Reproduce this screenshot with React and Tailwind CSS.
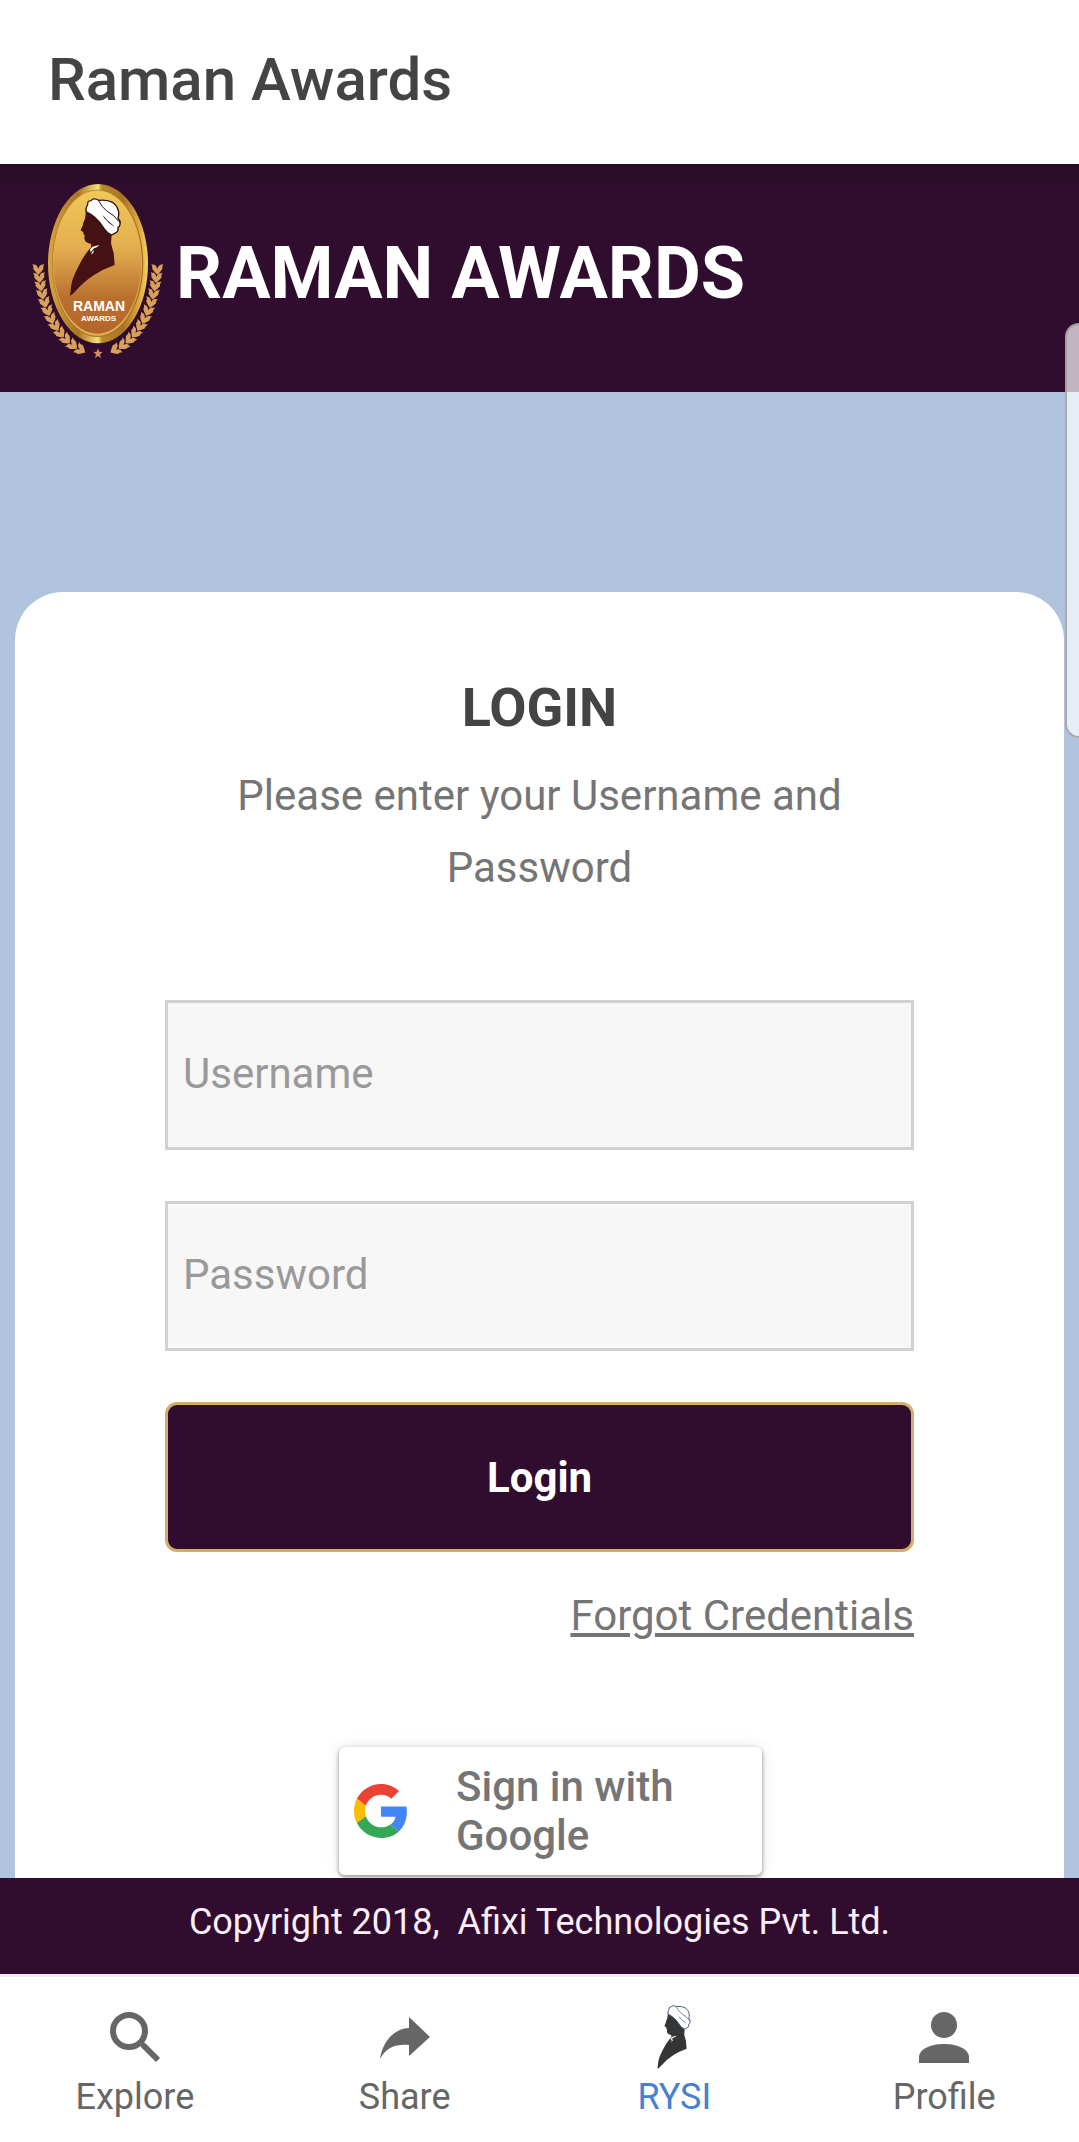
const LEAVES = [
  { x: 55, y: 297, r: 0 },
  { x: 58, y: 322, r: -4 },
  { x: 62, y: 347, r: -7 },
  { x: 67, y: 372, r: -10 },
  { x: 74, y: 397, r: -14 },
  { x: 83, y: 422, r: -18 },
  { x: 93, y: 446, r: -23 },
  { x: 106, y: 468, r: -30 },
  { x: 121, y: 489, r: -36 },
  { x: 138, y: 508, r: -43 },
  { x: 158, y: 525, r: -50 },
  { x: 181, y: 539, r: -60 },
];

/* Head in profile with turban, shared by the logo and the tab bar */
function Bust({ fill, line }) {
  return (
    <g>
      <path
        fill={fill}
        d="M198 122 L195 146 L190 158 Q189 168 182 180 Q184 185 190 185 L190 192 L194 196 L193 204 Q194 216 204 219 L213 222 L214 230 L206 240 Q188 262 175 290 Q156 325 153 350 L150 377 Q158 374 166 364 Q190 336 222 315 Q250 297 284 285 L281 250 L273 220 L275 194 L262 150 Z"
      />
      <path fill="#fff" d="M210 238 L218 230 L238 225 L232 231 L222 235 L212 247 Z M216 246 L222 240 L220 248 L213 254 Z" />
      <path
        fill="#fff"
        stroke={line}
        strokeWidth="4"
        strokeLinejoin="round"
        d="M198 125 Q197 112 203 104 Q201 93 213 92 Q221 82 237 91 Q262 88 279 98 Q298 112 296 136 L294 145 Q303 154 300 163 Q299 170 294 172 Q296 186 284 190 L275 195 Q262 190 254 178 Q242 158 224 142 Q212 132 198 125 Z"
      />
      <path fill="none" stroke={line} strokeWidth="3" d="M236 92 Q245 112 262 124 Q284 136 298 156" />
      <path fill={line} d="M243 128 Q252 146 266 158 L284 171 L279 165 L262 151 Q254 140 247 135 Z" />
    </g>
  );
}

function Leaf({ x, y, r }) {
  return (
    <path
      transform={`translate(${x} ${y}) rotate(${r})`}
      d="M-18 -15 Q-12 -12 -8 -13 Q-2 -9 0 -1 Q2 -9 8 -13 Q12 -12 18 -15 Q13 -8 15 0 Q10 8 0 17 Q-10 8 -15 0 Q-13 -8 -18 -15 Z"
    />
  );
}

function Logo() {
  return (
    <svg viewBox="0 0 450 600" className="w-[150px] h-[200px] shrink-0" role="img" aria-label="Raman Awards logo">
      <defs>
        <linearGradient id="rim" x1="0" y1="0" x2="1" y2="0">
          <stop offset="0" stopColor="#d9a441" />
          <stop offset="0.3" stopColor="#a9741f" />
          <stop offset="0.5" stopColor="#f5e27a" />
          <stop offset="0.54" stopColor="#b88a2c" />
          <stop offset="0.75" stopColor="#a87424" />
          <stop offset="0.9" stopColor="#dca63c" />
          <stop offset="1" stopColor="#f3cf62" />
        </linearGradient>
        <linearGradient id="field" x1="0" y1="0" x2="0" y2="1">
          <stop offset="0" stopColor="#efc857" />
          <stop offset="0.4" stopColor="#e3ae50" />
          <stop offset="0.75" stopColor="#b9702f" />
          <stop offset="1" stopColor="#b5652c" />
        </linearGradient>
      </defs>
      <ellipse cx="234" cy="281" rx="150" ry="239" fill="url(#rim)" />
      <ellipse cx="233" cy="280" rx="137" ry="221" fill="#a8742a" />
      <ellipse cx="232" cy="279" rx="134" ry="218" fill="#e6b04c" />
      <ellipse cx="232" cy="277" rx="132" ry="214" fill="url(#field)" />
      <Bust fill="#451112" line="#33100f" />
      <text x="237" y="423" textAnchor="middle" fill="#fff" className="font-['Liberation_Sans',sans-serif] text-[42px] font-bold">
        RAMAN
      </text>
      <text x="236" y="454" textAnchor="middle" fill="#fff" className="font-['Liberation_Sans',sans-serif] text-[24px] font-bold">
        AWARDS
      </text>
      <g fill="#d9a05a">
        {LEAVES.map((leaf) => (
          <Leaf key={leaf.y} {...leaf} />
        ))}
        <g transform="translate(467 0) scale(-1 1)">
          {LEAVES.map((leaf) => (
            <Leaf key={leaf.y} {...leaf} />
          ))}
        </g>
        <path fill="#cf8f5c" d="M234 535 L238 545 L248 546 L240 553 L243 564 L234 558 L225 564 L228 553 L220 546 L230 545 Z" />
      </g>
    </svg>
  );
}

function GoogleIcon() {
  return (
    <svg viewBox="0 0 48 48" className="w-[54px] h-[54px] shrink-0" aria-hidden="true">
      <path fill="#EA4335" d="M24 9.5c3.54 0 6.71 1.22 9.21 3.6l6.85-6.85C35.9 2.38 30.47 0 24 0 14.62 0 6.51 5.38 2.56 13.22l7.98 6.19C12.43 13.72 17.74 9.5 24 9.5z" />
      <path fill="#4285F4" d="M46.98 24.55c0-1.57-.15-3.09-.38-4.55H24v9.02h12.94c-.58 2.96-2.26 5.48-4.78 7.18l7.73 6c4.51-4.18 7.09-10.36 7.09-17.65z" />
      <path fill="#FBBC05" d="M10.53 28.59c-.48-1.45-.76-2.99-.76-4.59s.27-3.14.76-4.59l-7.98-6.19C.92 16.46 0 20.12 0 24c0 3.88.92 7.54 2.56 10.78l7.97-6.19z" />
      <path fill="#34A853" d="M24 48c6.48 0 11.93-2.13 15.89-5.81l-7.73-6c-2.15 1.45-4.92 2.3-8.16 2.3-6.26 0-11.57-4.22-13.47-9.91l-7.98 6.19C6.51 42.62 14.62 48 24 48z" />
    </svg>
  );
}

function SearchIcon() {
  return (
    <svg viewBox="0 0 54 54" className="w-[54px] h-[54px]" fill="none" stroke="#666" aria-hidden="true">
      <circle cx="21" cy="21" r="16" strokeWidth="6" />
      <path strokeWidth="6" d="M35 35 L50 50" />
      <path strokeWidth="5" d="M32 32 L37 37" />
    </svg>
  );
}

function ShareIcon() {
  return (
    <svg viewBox="0 0 54 54" className="w-[54px] h-[54px]" fill="#666" aria-hidden="true">
      <path d="M31 7 L52 27 L31 46 V35 C17 34 8 38 2 49 C4 35 13 19 31 18 Z" />
    </svg>
  );
}

function BustIcon() {
  return (
    <svg viewBox="150 84 152 294" className="w-[34px] h-16" aria-hidden="true">
      <Bust fill="#333536" line="#34465c" />
    </svg>
  );
}

function ProfileIcon() {
  return (
    <svg viewBox="0 0 54 54" className="w-[54px] h-[54px]" fill="#666" aria-hidden="true">
      <circle cx="27" cy="15" r="13" />
      <path d="M2 53 V46 C4 37 17 34 27 34 C37 34 50 37 52 46 V53 Z" />
    </svg>
  );
}

const TABS = [
  { label: "Explore", Icon: SearchIcon },
  { label: "Share", Icon: ShareIcon },
  { label: "RYSI", Icon: BustIcon, active: true },
  { label: "Profile", Icon: ProfileIcon },
];

function TextField({ label, type }) {
  return (
    <input
      type={type}
      aria-label={label}
      placeholder={label}
      className="block w-full h-[150px] px-[15px] pb-1 border-3 border-[#d1d1d1] bg-[#f7f7f7] text-[42px] text-[#444] placeholder:text-[#999] outline-0"
    />
  );
}

function LoginCard() {
  return (
    <main className="flex-1 bg-[#b0c4de] px-[15px] pt-[200px] flex flex-col">
      <div className="flex-1 bg-white rounded-t-[48px] px-[150px] pt-20">
        <form onSubmit={(e) => e.preventDefault()}>
          <div className="text-center pb-24">
            <h2 className="text-[54px] leading-[72px] font-bold text-[#444]">LOGIN</h2>
            <p className="text-[42px] leading-[72px] text-[#757575] px-12 pt-4">
              Please enter your Username and Password
            </p>
          </div>
          {/* Fields */}
          <div className="flex flex-col gap-[51px]">
            <TextField label="Username" type="text" />
            <TextField label="Password" type="password" />
            <button
              type="submit"
              className="h-[150px] rounded-xl border-3 border-[#d6ab70] bg-[#300d2e] text-white text-[42px] font-bold"
            >
              Login
            </button>
          </div>
          <div className="text-right pt-8">
            <a href="#forgot" className="text-[42px] leading-[64px] text-[#757575] underline">
              Forgot Credentials
            </a>
          </div>
        </form>
        {/* Google sign in */}
        <div className="flex justify-center pt-[99px] pl-[22px] pb-[3px]">
          <button
            type="button"
            className="flex items-center w-[423px] h-[128px] pl-[15px] pr-6 rounded-md bg-white text-left shadow-[0_2px_4px_rgba(0,0,0,0.40),0_0_16px_rgba(0,0,0,0.10)]"
          >
            <GoogleIcon />
            <span className="pl-12 text-[42px] leading-[49px] font-medium text-[#757575]">
              Sign in with Google
            </span>
          </button>
        </div>
      </div>
    </main>
  );
}

export default function App() {
  return (
    <div className="relative min-h-screen flex flex-col overflow-x-hidden bg-white font-[Roboto,sans-serif]">
      {/* Title bar */}
      <div className="h-[164px] px-12 pb-1 flex items-center text-[60px] font-medium text-[#444]">
        Raman Awards
      </div>
      {/* Brand header */}
      <header className="h-[228px] pl-5 flex items-start gap-1.5 pt-[6px] bg-linear-to-b from-[#280b25] to-[#300d2e] to-10%">
        <Logo />
        <h1 className="pt-14 text-[72px] leading-[96px] font-bold text-white">RAMAN AWARDS</h1>
      </header>
      <LoginCard />
      <footer className="h-24 pb-2 flex items-center justify-center bg-[#300d2e] text-[36px] text-[#fdeefb] whitespace-pre">
        {"Copyright 2018,  Afixi Technologies Pvt. Ltd."}
      </footer>
      {/* Tab bar */}
      <nav className="h-[169px] grid grid-cols-4 border-t-3 border-[#f6e8f5] bg-white">
        {TABS.map(({ label, Icon, active }) => (
          <button key={label} type="button" className="flex flex-col items-center pt-7">
            <span className="h-16 flex items-center">
              <Icon />
            </span>
            <span className={active ? "pt-1 text-[36px] leading-[48px] text-[#4780cf]" : "pt-1 text-[36px] leading-[48px] text-[#666]"}>
              {label}
            </span>
          </button>
        ))}
      </nav>
      {/* Edge panel handle */}
      <div className="absolute right-0 top-[323px] w-[14px] h-[415px] rounded-l-2xl border-2 border-r-0 border-[#999]/80 bg-white/70" />
    </div>
  );
}
